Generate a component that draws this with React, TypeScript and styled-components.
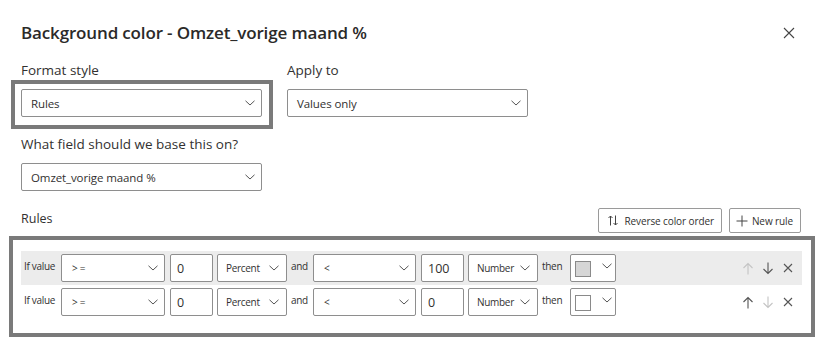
import React from "react";
import styled, { createGlobalStyle } from "styled-components";

const Global = createGlobalStyle`
  html, body { margin: 0; padding: 0; background: #ffffff; }
  body { font-family: "Open Sans", "Noto Sans", sans-serif; color: #323130; }
  * { box-sizing: border-box; }
`;

const Dialog = styled.div`
  width: 823px;
  height: 344px;
  padding: 19px 21px 0 21px;
  display: flex;
  flex-direction: column;
  background: #fff;
  overflow: hidden;
`;

const Header = styled.div`
  display: flex;
  align-items: center;
  justify-content: space-between;
  height: 28px;
`;

const Title = styled.h1`
  margin: 0;
  font-size: 17px;
  font-weight: 600;
  letter-spacing: -0.15px;
  color: #2b2a29;
  line-height: 28px;
`;

const CloseButton = styled.button`
  border: 0;
  background: none;
  padding: 0;
  width: 16px;
  height: 16px;
  margin-right: 5px;
  display: flex;
  align-items: center;
  justify-content: center;
  color: #555;
`;

const FieldsRow = styled.div`
  display: flex;
  gap: 25px;
  margin-top: 13px;
`;

const Field = styled.div`
  display: flex;
  flex-direction: column;
`;

const Label = styled.div`
  font-size: 13.5px;
  line-height: 20px;
  color: #323130;
  margin-bottom: 9px;
`;

const Highlight = styled.div<{ $m: string; $p: string }>`
  border: 4px solid #7a7a7a;
  margin: ${(p) => p.$m};
  padding: ${(p) => p.$p};
  background: #fff;
`;

const Select = styled.div<{ $w: number; $h?: number; $fs?: number; $pl?: number; $pr?: number }>`
  width: ${(p) => p.$w}px;
  height: ${(p) => p.$h ?? 28}px;
  border: 1px solid #8e8e8e;
  border-radius: 2px;
  background: #fff;
  display: flex;
  align-items: center;
  justify-content: space-between;
  padding: 0 ${(p) => p.$pr ?? 6}px 0 ${(p) => p.$pl ?? 8}px;
  font-size: ${(p) => p.$fs ?? 11.5}px;
  letter-spacing: ${(p) => ((p.$fs ?? 11.5) < 11 ? "-0.3px" : "-0.1px")};
  color: #323130;
  flex-shrink: 0;
  white-space: nowrap;
`;

const Section = styled.div`
  margin-top: 17px;
  display: flex;
  flex-direction: column;
`;

const RulesHeader = styled.div`
  display: flex;
  align-items: flex-end;
  justify-content: space-between;
  margin-top: 17px;
`;

const RulesLabel = styled.div`
  font-size: 12.5px;
  line-height: 16px;
  color: #323130;
  margin-bottom: 6px;
`;

const ButtonGroup = styled.div`
  display: flex;
  gap: 7px;
  margin-right: 1px;
`;

const ToolButton = styled.button<{ $pl: number; $gap: number }>`
  height: 25px;
  border: 1px solid #9a9a9a;
  border-radius: 2px;
  background: #fff;
  display: flex;
  align-items: center;
  gap: ${(p) => p.$gap}px;
  padding: 0 7px 0 ${(p) => p.$pl}px;
  font-family: inherit;
  font-size: 10px;
  letter-spacing: -0.1px;
  color: #323130;
`;

const RulesList = styled.div`
  display: flex;
  flex-direction: column;
`;

const RuleRow = styled.div<{ $shaded?: boolean }>`
  height: 34px;
  display: flex;
  align-items: center;
  padding: 0 0 0 3px;
  background: ${(p) => (p.$shaded ? "#ececec" : "transparent")};
`;

const RowText = styled.span<{ $w: number; $ml?: number }>`
  width: ${(p) => p.$w}px;
  margin-left: ${(p) => p.$ml ?? 0}px;
  font-size: 10px;
  letter-spacing: -0.3px;
  color: #323130;
  white-space: nowrap;
  flex-shrink: 0;
  margin-top: -4px;
`;

const Gap = styled.span<{ $w: number }>`
  width: ${(p) => p.$w}px;
  flex-shrink: 0;
`;

const Input = styled.div<{ $w: number }>`
  width: ${(p) => p.$w}px;
  height: 28px;
  border: 1px solid #8e8e8e;
  border-radius: 2px;
  background: #fff;
  display: flex;
  align-items: center;
  padding-left: 6px;
  font-size: 12.5px;
  color: #323130;
  flex-shrink: 0;
`;

const ColorSelect = styled.div`
  width: 46px;
  height: 28px;
  border: 1px solid #8e8e8e;
  border-radius: 2px;
  background: #fff;
  display: flex;
  align-items: flex-start;
  padding: 6px 0 0 4px;
  gap: 11px;
  flex-shrink: 0;
`;

const Swatch = styled.span<{ $c: string }>`
  width: 16px;
  height: 16px;
  border: 1px solid #8a8a8a;
  background: ${(p) => p.$c};
  flex-shrink: 0;
`;

const ChevronWrap = styled.span`
  display: flex;
  margin-top: 2px;
`;

const Actions = styled.div`
  margin-left: auto;
  display: flex;
  align-items: center;
  gap: 8px;
  padding-right: 8px;
`;

const IconButton = styled.span<{ $disabled?: boolean }>`
  display: flex;
  width: 12px;
  height: 14px;
  align-items: center;
  justify-content: center;
  color: ${(p) => (p.$disabled ? "#c4c4c4" : "#555")};
`;

const Chevron = ({ w = 10 }: { w?: number }) => (
  <svg width={w} height="6" viewBox="0 0 10 6" fill="none">
    <path d="M0.5 0.8 L5 5 L9.5 0.8" stroke="#555" strokeWidth="1" />
  </svg>
);

const CloseIcon = () => (
  <svg width="12" height="12" viewBox="0 0 12 12">
    <path d="M1 1 L11 11 M11 1 L1 11" stroke="#444" strokeWidth="1.1" />
  </svg>
);

const UpIcon = () => (
  <svg width="12" height="13" viewBox="0 0 12 13" fill="none">
    <path d="M6 12.5 V1.5 M1.5 6 L6 1.5 L10.5 6" stroke="currentColor" strokeWidth="1.1" />
  </svg>
);

const DownIcon = () => (
  <svg width="12" height="13" viewBox="0 0 12 13" fill="none">
    <path d="M6 0.5 V11.5 M1.5 7 L6 11.5 L10.5 7" stroke="currentColor" strokeWidth="1.1" />
  </svg>
);

const XIcon = () => (
  <svg width="10" height="10" viewBox="0 0 10 10" fill="none">
    <path d="M1 1 L9 9 M9 1 L1 9" stroke="currentColor" strokeWidth="1.1" />
  </svg>
);

const SortIcon = () => (
  <svg width="10" height="11" viewBox="0 0 10 11" fill="none">
    <path d="M2.5 10.5 V1 M0.5 3 L2.5 1 L4.5 3" stroke="#444" strokeWidth="1" />
    <path d="M7.5 0.5 V10 M5.5 8 L7.5 10 L9.5 8" stroke="#444" strokeWidth="1" />
  </svg>
);

const PlusIcon = () => (
  <svg width="12" height="12" viewBox="0 0 12 12" fill="none">
    <path d="M6 0.5 V11.5 M0.5 6 H11.5" stroke="#444" strokeWidth="1" />
  </svg>
);

type Rule = {
  op1: string;
  v1: string;
  t1: string;
  op2: string;
  v2: string;
  t2: string;
  color: string;
  upDisabled: boolean;
  downDisabled: boolean;
  shaded: boolean;
};

const rules: Rule[] = [
  { op1: "> =", v1: "0", t1: "Percent", op2: "<", v2: "100", t2: "Number", color: "#d6d6d6", upDisabled: true, downDisabled: false, shaded: true },
  { op1: "> =", v1: "0", t1: "Percent", op2: "<", v2: "0", t2: "Number", color: "#ffffff", upDisabled: false, downDisabled: true, shaded: false },
];

export default function App() {
  return (
    <>
      <Global />
      <Dialog>
        <Header>
          <Title>Background color - Omzet_vorige maand %</Title>
          <CloseButton aria-label="Close">
            <CloseIcon />
          </CloseButton>
        </Header>

        <FieldsRow>
          <Field>
            <Label>Format style</Label>
            <Highlight $m="-9px -11px -12px -10px" $p="5px 7px 8px 6px">
              <Select $w={241} $pl={9}>
                <span>Rules</span>
                <Chevron />
              </Select>
            </Highlight>
          </Field>
          <Field>
            <Label>Apply to</Label>
            <Select $w={241} $pl={9}>
              <span>Values only</span>
              <Chevron />
            </Select>
          </Field>
        </FieldsRow>

        <Section>
          <Label>What field should we base this on?</Label>
          <Select $w={241} $pl={9}>
            <span>Omzet_vorige maand %</span>
            <Chevron />
          </Select>
        </Section>

        <RulesHeader>
          <RulesLabel>Rules</RulesLabel>
          <ButtonGroup>
            <ToolButton $pl={9} $gap={6}>
              <SortIcon />
              Reverse color order
            </ToolButton>
            <ToolButton $pl={6} $gap={4}>
              <PlusIcon />
              New rule
            </ToolButton>
          </ButtonGroup>
        </RulesHeader>

        <Highlight $m="3px -13px 0 -12px" $p="11px 9px 14px 8px">
          <RulesList>
            {rules.map((r, i) => (
              <RuleRow key={i} $shaded={r.shaded}>
                <RowText $w={37}>If value</RowText>
                <Select $w={104} $pl={10} $fs={10}>
                  <span>{r.op1}</span>
                  <Chevron />
                </Select>
                <Gap $w={5} />
                <Input $w={43}>{r.v1}</Input>
                <Gap $w={4} />
                <Select $w={70} $fs={10} $pr={7}>
                  <span>{r.t1}</span>
                  <Chevron />
                </Select>
                <RowText $w={22} $ml={4}>and</RowText>
                <Select $w={103} $pl={10} $fs={10}>
                  <span>{r.op2}</span>
                  <Chevron />
                </Select>
                <Gap $w={5} />
                <Input $w={43}>{r.v2}</Input>
                <Gap $w={4} />
                <Select $w={70} $fs={10} $pr={7}>
                  <span>{r.t2}</span>
                  <Chevron />
                </Select>
                <RowText $w={28} $ml={4}>then</RowText>
                <ColorSelect>
                  <Swatch $c={r.color} />
                  <ChevronWrap>
                    <Chevron />
                  </ChevronWrap>
                </ColorSelect>
                <Actions>
                  <IconButton $disabled={r.upDisabled}>
                    <UpIcon />
                  </IconButton>
                  <IconButton $disabled={r.downDisabled}>
                    <DownIcon />
                  </IconButton>
                  <IconButton>
                    <XIcon />
                  </IconButton>
                </Actions>
              </RuleRow>
            ))}
          </RulesList>
        </Highlight>
      </Dialog>
    </>
  );
}
